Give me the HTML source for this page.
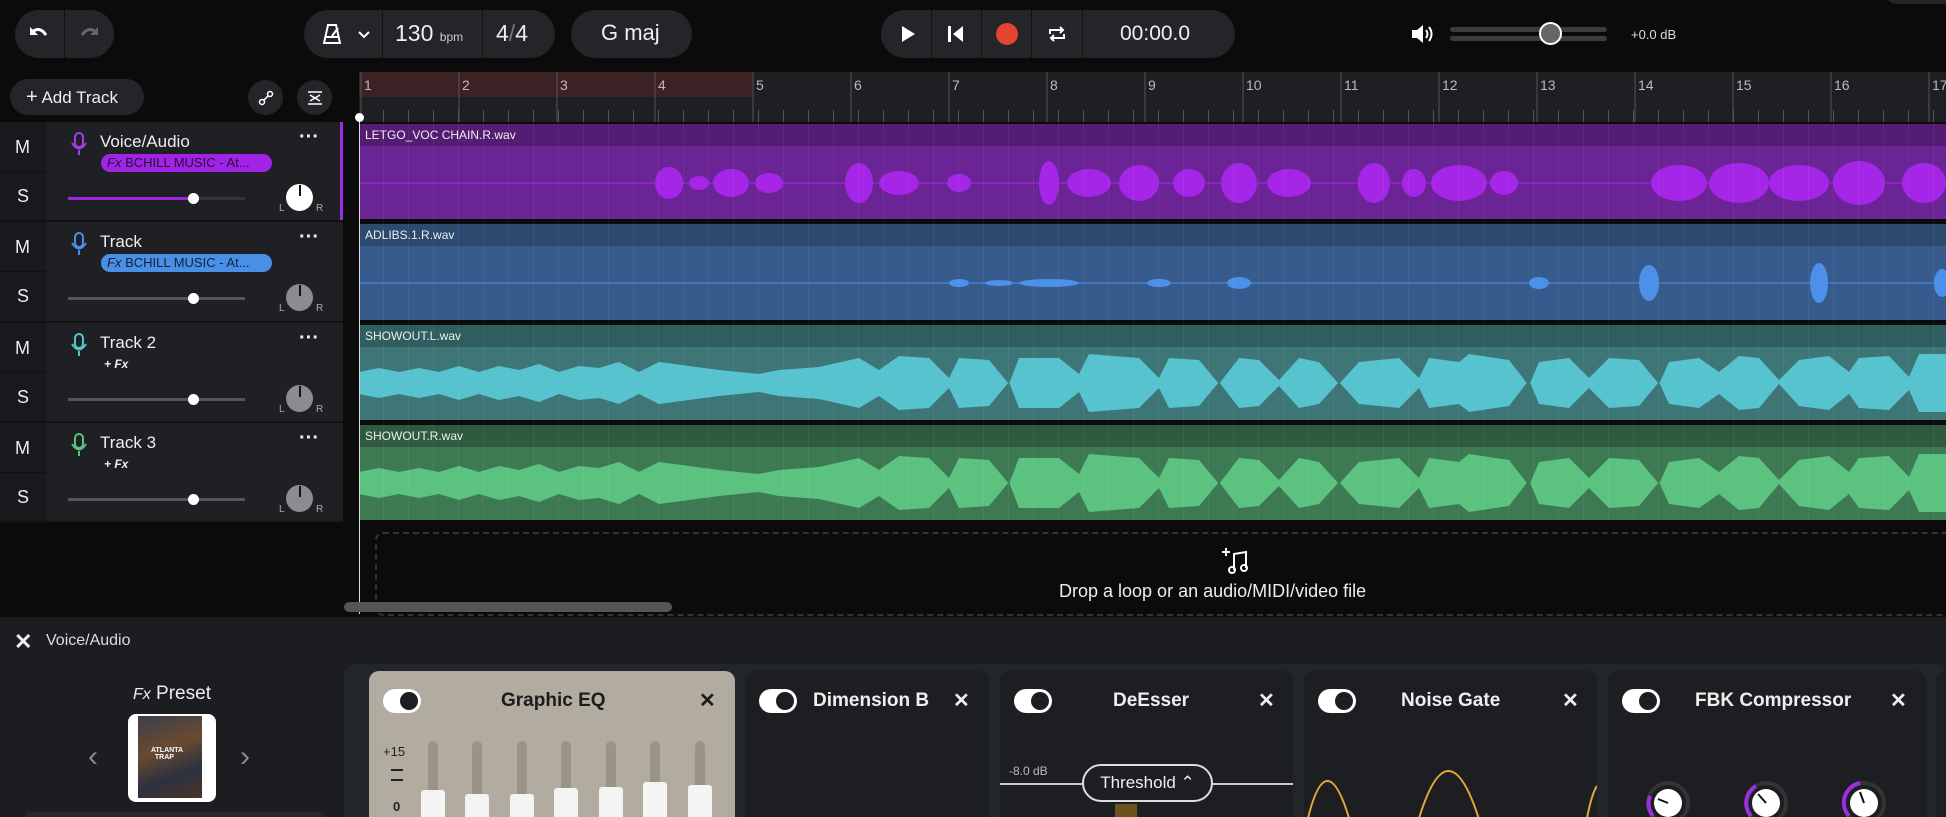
<!DOCTYPE html>
<html style="overflow:hidden;width:1946px;height:817px"><head><meta charset="utf-8"><style>
*{box-sizing:border-box;margin:0;padding:0}
body{width:1946px;height:817px;overflow:hidden;background:#0b0b0c;font-family:"Liberation Sans",sans-serif;color:#eee;position:relative}
.a{position:absolute}
.pill{position:absolute;background:#232528;border-radius:30px}
.txt{position:absolute;white-space:nowrap}
.card{position:absolute;top:671px;height:146px;background:#1c1e21;border-radius:10px 10px 0 0;overflow:hidden}
.tog{position:absolute;left:14px;top:18px;width:38px;height:24px;border-radius:12px;background:#fff}
.tog:after{content:"";position:absolute;right:3px;top:3px;width:18px;height:18px;border-radius:50%;background:#1c1e21}
.ct{position:absolute;top:19px;font-size:19px;font-weight:bold;color:#eee}
.cx{position:absolute;top:17px;font-size:20px;font-weight:bold;color:#eee}
</style></head><body>

<!-- top bar -->
<div class="pill" style="left:15px;top:10px;width:99px;height:48px"></div>
<div class="a" style="left:64px;top:10px;width:1px;height:48px;background:#111"></div>
<svg class="a" style="left:27px;top:22px" width="24" height="24" viewBox="0 0 24 24"><path d="M4 11 Q12 3 19 13" stroke="#fff" stroke-width="3" fill="none"/><path d="M3 5 L3 13 L11 13Z" fill="#fff"/></svg>
<svg class="a" style="left:77px;top:22px" width="24" height="24" viewBox="0 0 24 24"><path d="M20 11 Q12 3 5 13" stroke="#666" stroke-width="3" fill="none"/><path d="M21 5 L21 13 L13 13Z" fill="#666"/></svg>

<div class="pill" style="left:304px;top:10px;width:251px;height:48px"></div>
<div class="a" style="left:382px;top:10px;width:1px;height:48px;background:#111"></div>
<div class="a" style="left:482px;top:10px;width:1px;height:48px;background:#111"></div>
<svg class="a" style="left:320px;top:22px" width="24" height="24" viewBox="0 0 24 24"><path d="M8 3 L16 3 L20 21 L4 21Z M6 15 L18 15 M12 14 L18 6" stroke="#fff" stroke-width="2" fill="none"/></svg>
<svg class="a" style="left:358px;top:30px" width="12" height="10"><path d="M1 2 L6 7 L11 2" stroke="#fff" stroke-width="2" fill="none"/></svg>
<div class="txt" style="left:395px;top:20px;font-size:23px">130 <span style="font-size:12px;color:#ccc">bpm</span></div>
<div class="txt" style="left:496px;top:20px;font-size:23px">4<span style="color:#777">/</span>4</div>
<div class="pill" style="left:571px;top:10px;width:121px;height:48px"></div>
<div class="txt" style="left:601px;top:20px;font-size:22px">G maj</div>

<div class="pill" style="left:881px;top:10px;width:354px;height:48px"></div>
<div class="a" style="left:931px;top:10px;width:1px;height:48px;background:#111"></div>
<div class="a" style="left:981px;top:10px;width:1px;height:48px;background:#111"></div>
<div class="a" style="left:1031px;top:10px;width:1px;height:48px;background:#111"></div>
<div class="a" style="left:1082px;top:10px;width:1px;height:48px;background:#111"></div>
<svg class="a" style="left:898px;top:24px" width="20" height="20"><path d="M4 2 L17 10 L4 18Z" fill="#fff"/></svg>
<svg class="a" style="left:946px;top:24px" width="20" height="20"><rect x="2" y="2" width="3" height="16" fill="#fff"/><path d="M17 2 L7 10 L17 18Z" fill="#fff"/></svg>
<div class="a" style="left:996px;top:23px;width:22px;height:22px;border-radius:50%;background:#e3432f"></div>
<svg class="a" style="left:1045px;top:22px" width="24" height="24"><path d="M5 12 V8 H18 M15 5 L18 8 L15 11 M19 12 V16 H6 M9 13 L6 16 L9 19" stroke="#fff" stroke-width="2" fill="none"/></svg>
<div class="txt" style="left:1120px;top:22px;font-size:21px">00:00.0</div>

<svg class="a" style="left:1410px;top:22px" width="26" height="24"><path d="M2 8 H7 L13 3 V21 L7 16 H2Z" fill="#fff"/><path d="M16 8 Q19 12 16 16 M19 5 Q24 12 19 19" stroke="#fff" stroke-width="2" fill="none"/></svg>
<div class="a" style="left:1450px;top:27px;width:157px;height:5px;background:#3a3c3f;border-radius:3px"></div>
<div class="a" style="left:1450px;top:36px;width:157px;height:5px;background:#3a3c3f;border-radius:3px"></div>
<div class="a" style="left:1539px;top:22px;width:23px;height:23px;border-radius:50%;background:#666;border:2px solid #fff"></div>
<div class="txt" style="left:1631px;top:27px;font-size:13px;color:#ddd">+0.0 dB</div>
<div class="a" style="left:1885px;top:-20px;width:70px;height:24px;border-radius:12px;background:#232528"></div>

<!-- add track row -->
<div class="pill" style="left:10px;top:79px;width:134px;height:36px"></div>
<div class="txt" style="left:26px;top:86px;font-size:17px"><b style="font-size:20px;font-weight:normal">+</b> Add Track</div>
<div class="pill" style="left:248px;top:80px;width:35px;height:35px"></div>
<div class="pill" style="left:297px;top:80px;width:35px;height:35px"></div>
<svg class="a" style="left:256px;top:88px" width="20" height="20"><circle cx="6" cy="14" r="2.5" stroke="#fff" fill="none" stroke-width="1.5"/><circle cx="14" cy="6" r="2.5" stroke="#fff" fill="none" stroke-width="1.5"/><path d="M7.5 12.5 L12.5 7.5" stroke="#fff" stroke-width="1.5"/></svg>
<svg class="a" style="left:305px;top:88px" width="20" height="20"><path d="M3 4 H17 M3 16 H17 M5 7 L10 10 L15 7 M5 13 L10 10 L15 13" stroke="#fff" stroke-width="1.6" fill="none"/></svg>

<!-- ruler -->
<div class="a" style="left:359px;top:72px;width:1587px;height:50px;background:#1d1f22"></div>
<div class="a" style="left:359px;top:72px;width:393px;height:25px;background:#3c2224"></div>
<svg class="a" style="left:359px;top:72px" width="1587" height="50">
<g stroke="#555" stroke-width="1">
<line x1="2" y1="0" x2="2" y2="50"/><line x1="100" y1="0" x2="100" y2="50"/><line x1="198" y1="0" x2="198" y2="50"/><line x1="296" y1="0" x2="296" y2="50"/><line x1="394" y1="0" x2="394" y2="50"/><line x1="492" y1="0" x2="492" y2="50"/><line x1="590" y1="0" x2="590" y2="50"/><line x1="688" y1="0" x2="688" y2="50"/><line x1="786" y1="0" x2="786" y2="50"/><line x1="884" y1="0" x2="884" y2="50"/><line x1="982" y1="0" x2="982" y2="50"/><line x1="1080" y1="0" x2="1080" y2="50"/><line x1="1178" y1="0" x2="1178" y2="50"/><line x1="1276" y1="0" x2="1276" y2="50"/><line x1="1374" y1="0" x2="1374" y2="50"/><line x1="1472" y1="0" x2="1472" y2="50"/><line x1="1570" y1="0" x2="1570" y2="50"/>
</g>
<g fill="#bbb" font-size="14" font-family="Liberation Sans">
<text x="5" y="18">1</text><text x="103" y="18">2</text><text x="201" y="18">3</text><text x="299" y="18">4</text><text x="397" y="18">5</text><text x="495" y="18">6</text><text x="593" y="18">7</text><text x="691" y="18">8</text><text x="789" y="18">9</text><text x="887" y="18">10</text><text x="985" y="18">11</text><text x="1083" y="18">12</text><text x="1181" y="18">13</text><text x="1279" y="18">14</text><text x="1377" y="18">15</text><text x="1475" y="18">16</text><text x="1573" y="18">17</text>
</g>
</svg>
<div class="a" style="left:359px;top:110px;width:1587px;height:12px;background:repeating-linear-gradient(90deg,transparent 0 24px,#555 24px 25px)"></div>

<!-- left track panel -->
<div class="a" style="left:0;top:122px;width:343px;height:400px;background:#1e2023"></div>
<div class="a" style="left:0;top:122px;width:47px;height:400px;background:#18191c"></div>
<div class="a" style="left:340px;top:122px;width:3px;height:98px;background:#9b2ee0"></div>

<div class="a" style="left:0;top:122px;width:343px;height:100px;border-bottom:2px solid #111">
 <div class="a" style="left:0;top:49px;width:47px;height:1px;background:#111"></div>
 <div class="txt" style="left:15px;top:15px;font-size:18px">M</div><div class="txt" style="left:17px;top:64px;font-size:18px">S</div>
 <svg class="a" style="left:70px;top:10px" width="18" height="24"><rect x="5" y="1" width="8" height="14" rx="4" stroke="#a23ce6" stroke-width="2" fill="none"/><path d="M2 11 Q9 22 16 11 M9 18 V23" stroke="#a23ce6" stroke-width="2" fill="none"/></svg>
 <div class="txt" style="left:100px;top:10px;font-size:17px">Voice/Audio</div>
 <div class="txt" style="left:299px;top:4px;font-size:20px;font-weight:bold">···</div>
 <div class="a" style="left:101px;top:32px;width:171px;height:18px;border-radius:9px;background:#a124e6;font-size:13px;color:#231033;padding-left:6px;line-height:18px;white-space:nowrap"><i>Fx</i> BCHILL MUSIC - At...</div>
 <div class="a" style="left:68px;top:75px;width:177px;height:3px;background:#333"></div>
 <div class="a" style="left:68px;top:75px;width:125px;height:3px;background:#a124e6"></div>
 <div class="a" style="left:188px;top:71px;width:11px;height:11px;border-radius:50%;background:#fff"></div>
 <div class="a" style="left:286px;top:62px;width:27px;height:27px;border-radius:50%;background:#fff"></div><div class="a" style="left:299px;top:63px;width:2px;height:11px;background:#111"></div>
 <div class="txt" style="left:279px;top:81px;font-size:10px;color:#aaa">L</div><div class="txt" style="left:316px;top:81px;font-size:10px;color:#aaa">R</div>
</div>
<div class="a" style="left:0;top:222px;width:343px;height:101px;border-bottom:2px solid #111">
 <div class="a" style="left:0;top:49px;width:47px;height:1px;background:#111"></div>
 <div class="txt" style="left:15px;top:15px;font-size:18px">M</div><div class="txt" style="left:17px;top:64px;font-size:18px">S</div>
 <svg class="a" style="left:70px;top:10px" width="18" height="24"><rect x="5" y="1" width="8" height="14" rx="4" stroke="#4a8fe6" stroke-width="2" fill="none"/><path d="M2 11 Q9 22 16 11 M9 18 V23" stroke="#4a8fe6" stroke-width="2" fill="none"/></svg>
 <div class="txt" style="left:100px;top:10px;font-size:17px">Track</div>
 <div class="txt" style="left:299px;top:4px;font-size:20px;font-weight:bold">···</div>
 <div class="a" style="left:101px;top:32px;width:171px;height:18px;border-radius:9px;background:#4a8fe6;font-size:13px;color:#10213a;padding-left:6px;line-height:18px;white-space:nowrap"><i>Fx</i> BCHILL MUSIC - At...</div>
 <div class="a" style="left:68px;top:75px;width:177px;height:3px;background:#555"></div>
 <div class="a" style="left:188px;top:71px;width:11px;height:11px;border-radius:50%;background:#fff"></div>
 <div class="a" style="left:286px;top:62px;width:27px;height:27px;border-radius:50%;background:#8a8c90"></div><div class="a" style="left:299px;top:63px;width:2px;height:11px;background:#111"></div>
 <div class="txt" style="left:279px;top:81px;font-size:10px;color:#aaa">L</div><div class="txt" style="left:316px;top:81px;font-size:10px;color:#aaa">R</div>
</div>
<div class="a" style="left:0;top:323px;width:343px;height:100px;border-bottom:2px solid #111">
 <div class="a" style="left:0;top:49px;width:47px;height:1px;background:#111"></div>
 <div class="txt" style="left:15px;top:15px;font-size:18px">M</div><div class="txt" style="left:17px;top:64px;font-size:18px">S</div>
 <svg class="a" style="left:70px;top:10px" width="18" height="24"><rect x="5" y="1" width="8" height="14" rx="4" stroke="#56c3cf" stroke-width="2" fill="none"/><path d="M2 11 Q9 22 16 11 M9 18 V23" stroke="#56c3cf" stroke-width="2" fill="none"/></svg>
 <div class="txt" style="left:100px;top:10px;font-size:17px">Track 2</div>
 <div class="txt" style="left:299px;top:4px;font-size:20px;font-weight:bold">···</div>
 <div class="txt" style="left:104px;top:34px;font-size:12px;font-weight:bold"><i>+ Fx</i></div>
 <div class="a" style="left:68px;top:75px;width:177px;height:3px;background:#555"></div>
 <div class="a" style="left:188px;top:71px;width:11px;height:11px;border-radius:50%;background:#fff"></div>
 <div class="a" style="left:286px;top:62px;width:27px;height:27px;border-radius:50%;background:#8a8c90"></div><div class="a" style="left:299px;top:63px;width:2px;height:11px;background:#111"></div>
 <div class="txt" style="left:279px;top:81px;font-size:10px;color:#aaa">L</div><div class="txt" style="left:316px;top:81px;font-size:10px;color:#aaa">R</div>
</div>
<div class="a" style="left:0;top:423px;width:343px;height:100px;border-bottom:2px solid #111">
 <div class="a" style="left:0;top:49px;width:47px;height:1px;background:#111"></div>
 <div class="txt" style="left:15px;top:15px;font-size:18px">M</div><div class="txt" style="left:17px;top:64px;font-size:18px">S</div>
 <svg class="a" style="left:70px;top:10px" width="18" height="24"><rect x="5" y="1" width="8" height="14" rx="4" stroke="#5cc280" stroke-width="2" fill="none"/><path d="M2 11 Q9 22 16 11 M9 18 V23" stroke="#5cc280" stroke-width="2" fill="none"/></svg>
 <div class="txt" style="left:100px;top:10px;font-size:17px">Track 3</div>
 <div class="txt" style="left:299px;top:4px;font-size:20px;font-weight:bold">···</div>
 <div class="txt" style="left:104px;top:34px;font-size:12px;font-weight:bold"><i>+ Fx</i></div>
 <div class="a" style="left:68px;top:75px;width:177px;height:3px;background:#555"></div>
 <div class="a" style="left:188px;top:71px;width:11px;height:11px;border-radius:50%;background:#fff"></div>
 <div class="a" style="left:286px;top:62px;width:27px;height:27px;border-radius:50%;background:#8a8c90"></div><div class="a" style="left:299px;top:63px;width:2px;height:11px;background:#111"></div>
 <div class="txt" style="left:279px;top:81px;font-size:10px;color:#aaa">L</div><div class="txt" style="left:316px;top:81px;font-size:10px;color:#aaa">R</div>
</div>

<!-- clips -->
<svg class="a" style="left:359px;top:122px" width="1587" height="400">
<rect x="0" y="2" width="1587" height="22" fill="#541d73"/>
<rect x="0" y="24" width="1587" height="73" fill="#6a2496"/>
<line x1="0" y1="61" x2="1587" y2="61" stroke="#a526e6" stroke-width="1"/>
<g fill="#a526e6">
<ellipse cx="310" cy="61" rx="14" ry="16"/><ellipse cx="340" cy="61" rx="10" ry="7"/><ellipse cx="372" cy="61" rx="18" ry="14"/><ellipse cx="410" cy="61" rx="14" ry="10"/>
<ellipse cx="500" cy="61" rx="14" ry="20"/><ellipse cx="540" cy="61" rx="20" ry="12"/><ellipse cx="600" cy="61" rx="12" ry="9"/>
<ellipse cx="690" cy="61" rx="10" ry="22"/><ellipse cx="730" cy="61" rx="22" ry="14"/><ellipse cx="780" cy="61" rx="20" ry="18"/><ellipse cx="830" cy="61" rx="16" ry="14"/><ellipse cx="880" cy="61" rx="18" ry="20"/><ellipse cx="930" cy="61" rx="22" ry="14"/>
<ellipse cx="1015" cy="61" rx="16" ry="20"/><ellipse cx="1055" cy="61" rx="12" ry="14"/><ellipse cx="1100" cy="61" rx="28" ry="18"/><ellipse cx="1145" cy="61" rx="14" ry="12"/>
<ellipse cx="1320" cy="61" rx="28" ry="18"/><ellipse cx="1380" cy="61" rx="30" ry="20"/><ellipse cx="1440" cy="61" rx="30" ry="18"/><ellipse cx="1500" cy="61" rx="26" ry="22"/><ellipse cx="1565" cy="61" rx="22" ry="20"/>
</g>
<text x="6" y="17" fill="#eee" font-size="12" font-family="Liberation Sans">LETGO_VOC CHAIN.R.wav</text>
<rect x="0" y="102" width="1587" height="22" fill="#2b4a6e"/>
<rect x="0" y="124" width="1587" height="74" fill="#365b8c"/>
<line x1="0" y1="161" x2="1587" y2="161" stroke="#4d90ea" stroke-width="1"/>
<g fill="#4d90ea">
<ellipse cx="600" cy="161" rx="10" ry="4"/><ellipse cx="640" cy="161" rx="14" ry="3"/><ellipse cx="690" cy="161" rx="30" ry="4"/><ellipse cx="800" cy="161" rx="12" ry="4"/><ellipse cx="880" cy="161" rx="12" ry="6"/><ellipse cx="1180" cy="161" rx="10" ry="6"/><ellipse cx="1290" cy="161" rx="10" ry="18"/><ellipse cx="1460" cy="161" rx="9" ry="20"/><ellipse cx="1583" cy="161" rx="8" ry="14"/>
</g>
<text x="6" y="117" fill="#eee" font-size="12" font-family="Liberation Sans">ADLIBS.1.R.wav</text>
<rect x="0" y="203" width="1587" height="22" fill="#2f5e60"/>
<rect x="0" y="225" width="1587" height="73" fill="#56c3cf"/>
<path d="M0 225 H1587 V232 L1560 232 L1550 255 L1530 234 L1500 236 L1490 250 L1470 234 L1440 238 L1420 258 L1400 236 L1380 234 L1360 250 L1340 236 L1310 240 L1300 262 L1280 238 L1250 236 L1230 256 L1210 236 L1180 240 L1170 264 L1150 238 L1110 232 L1100 240 L1070 236 L1060 256 L1040 236 L1000 240 L980 262 L960 240 L940 236 L920 258 L900 238 L880 236 L860 262 L840 238 L810 236 L800 256 L780 236 L730 232 L720 252 L700 236 L660 236 L650 262 L630 238 L600 236 L590 256 L570 236 L540 234 L520 248 L500 236 L460 245 L420 248 L400 252 L360 248 L330 244 L300 240 L280 250 L260 240 L240 246 L220 244 L200 250 L180 242 L160 248 L140 244 L120 250 L100 244 L80 250 L60 246 L40 250 L20 246 L0 250Z" fill="#3e7577"/>
<path d="M0 298 H1587 V290 L1560 290 L1550 268 L1530 288 L1500 286 L1490 272 L1470 288 L1440 284 L1420 262 L1400 286 L1380 288 L1360 272 L1340 286 L1310 282 L1300 260 L1280 284 L1250 286 L1230 266 L1210 286 L1180 282 L1170 258 L1150 284 L1110 290 L1100 282 L1070 286 L1060 266 L1040 286 L1000 282 L980 260 L960 282 L940 286 L920 264 L900 284 L880 286 L860 260 L840 284 L810 286 L800 266 L780 286 L730 290 L720 270 L700 286 L660 286 L650 260 L630 284 L600 286 L590 266 L570 286 L540 288 L520 274 L500 286 L460 277 L420 274 L400 270 L360 274 L330 278 L300 282 L280 272 L260 282 L240 276 L220 278 L200 272 L180 280 L160 274 L140 278 L120 272 L100 278 L80 272 L60 276 L40 272 L20 276 L0 272Z" fill="#3e7577"/>
<text x="6" y="218" fill="#eee" font-size="12" font-family="Liberation Sans">SHOWOUT.L.wav</text>
<rect x="0" y="303" width="1587" height="22" fill="#2f5a3e"/>
<rect x="0" y="325" width="1587" height="73" fill="#5cc280"/>
<path d="M0 325 H1587 V332 L1560 332 L1550 355 L1530 334 L1500 336 L1490 350 L1470 334 L1440 338 L1420 358 L1400 336 L1380 334 L1360 350 L1340 336 L1310 340 L1300 362 L1280 338 L1250 336 L1230 356 L1210 336 L1180 340 L1170 364 L1150 338 L1110 332 L1100 340 L1070 336 L1060 356 L1040 336 L1000 340 L980 362 L960 340 L940 336 L920 358 L900 338 L880 336 L860 362 L840 338 L810 336 L800 356 L780 336 L730 332 L720 352 L700 336 L660 336 L650 362 L630 338 L600 336 L590 356 L570 336 L540 334 L520 348 L500 336 L460 345 L420 348 L400 352 L360 348 L330 344 L300 340 L280 350 L260 340 L240 346 L220 344 L200 350 L180 342 L160 348 L140 344 L120 350 L100 344 L80 350 L60 346 L40 350 L20 346 L0 350Z" fill="#3d7a54"/>
<path d="M0 398 H1587 V390 L1560 390 L1550 368 L1530 388 L1500 386 L1490 372 L1470 388 L1440 384 L1420 362 L1400 386 L1380 388 L1360 372 L1340 386 L1310 382 L1300 360 L1280 384 L1250 386 L1230 366 L1210 386 L1180 382 L1170 358 L1150 384 L1110 390 L1100 382 L1070 386 L1060 366 L1040 386 L1000 382 L980 360 L960 382 L940 386 L920 364 L900 384 L880 386 L860 360 L840 384 L810 386 L800 366 L780 386 L730 390 L720 370 L700 386 L660 386 L650 360 L630 384 L600 386 L590 366 L570 386 L540 388 L520 374 L500 386 L460 377 L420 374 L400 370 L360 374 L330 378 L300 382 L280 372 L260 382 L240 376 L220 378 L200 372 L180 380 L160 374 L140 378 L120 372 L100 378 L80 372 L60 376 L40 372 L20 376 L0 372Z" fill="#3d7a54"/>
<text x="6" y="318" fill="#eee" font-size="12" font-family="Liberation Sans">SHOWOUT.R.wav</text>
</svg>
<div class="a" style="left:359px;top:122px;width:1587px;height:400px;background:repeating-linear-gradient(90deg,transparent 0 24px,rgba(255,255,255,0.05) 24px 25px)"></div>

<div class="a" style="left:359px;top:114px;width:1px;height:500px;background:#ddd"></div>
<div class="a" style="left:355px;top:113px;width:9px;height:9px;border-radius:50%;background:#fff"></div>

<div class="a" style="left:375px;top:532px;width:1600px;height:84px;border:2px dashed #333;border-radius:8px"></div>
<svg class="a" style="left:1222px;top:546px" width="30" height="30"><path d="M4 2 V10 M0 6 H8" stroke="#fff" stroke-width="2"/><path d="M12 24 V8 L24 6 V22" stroke="#fff" stroke-width="2" fill="none"/><circle cx="10" cy="24" r="3" stroke="#fff" stroke-width="2" fill="none"/><circle cx="22" cy="22" r="3" stroke="#fff" stroke-width="2" fill="none"/></svg>
<div class="txt" style="left:1059px;top:581px;font-size:18px">Drop a loop or an audio/MIDI/video file</div>
<div class="a" style="left:344px;top:602px;width:328px;height:10px;border-radius:5px;background:#555"></div>

<!-- bottom panel -->
<div class="a" style="left:0;top:617px;width:1946px;height:200px;background:#1b1d20"></div>
<div class="txt" style="left:14px;top:629px;font-size:22px;font-weight:bold">✕</div>
<div class="txt" style="left:46px;top:632px;font-size:16px;color:#ddd">Voice/Audio</div>
<div class="txt" style="left:133px;top:683px;font-size:19px"><i style="font-size:16px">Fx</i> Preset</div>
<div class="a" style="left:128px;top:714px;width:88px;height:88px;border-radius:8px;background:#fff"></div>
<div class="a" style="left:138px;top:716px;width:64px;height:82px;background:linear-gradient(160deg,#3a3f4a,#6a4a30 40%,#2b3140 70%,#4a3528)"></div>
<div class="txt" style="left:151px;top:747px;font-size:7px;font-weight:bold;color:#fff">ATLANTA<br>&nbsp;&nbsp;TRAP</div>
<div class="txt" style="left:88px;top:740px;font-size:30px;color:#888">‹</div>
<div class="txt" style="left:240px;top:740px;font-size:30px;color:#888">›</div>
<div class="a" style="left:25px;top:812px;width:300px;height:10px;border-radius:5px;background:#26282c"></div>

<div class="a" style="left:344px;top:664px;width:1602px;height:153px;background:#22252a;border-radius:12px 12px 0 0"></div>
<div class="card" style="left:369px;width:366px;background:#b2aba0">
 <div class="tog" style="background:#fff"></div>
 <div class="ct" style="left:132px;color:#1b1b1b">Graphic EQ</div>
 <div class="cx" style="left:330px;color:#1b1b1b">✕</div>
 <div class="txt" style="left:14px;top:73px;font-size:13px;color:#222">+15</div>
 <div class="a" style="left:22px;top:98px;width:12px;height:2px;background:#222"></div>
 <div class="a" style="left:22px;top:108px;width:12px;height:2px;background:#222"></div>
 <div class="txt" style="left:24px;top:128px;font-size:13px;color:#222;font-weight:bold">0</div>
 <div class="a" style="left:59px;top:70px;width:10px;height:90px;border-radius:5px;background:#9a9388"></div>
 <div class="a" style="left:103px;top:70px;width:10px;height:90px;border-radius:5px;background:#9a9388"></div>
 <div class="a" style="left:148px;top:70px;width:10px;height:90px;border-radius:5px;background:#9a9388"></div>
 <div class="a" style="left:192px;top:70px;width:10px;height:90px;border-radius:5px;background:#9a9388"></div>
 <div class="a" style="left:237px;top:70px;width:10px;height:90px;border-radius:5px;background:#9a9388"></div>
 <div class="a" style="left:281px;top:70px;width:10px;height:90px;border-radius:5px;background:#9a9388"></div>
 <div class="a" style="left:326px;top:70px;width:10px;height:90px;border-radius:5px;background:#9a9388"></div>
 <div class="a" style="left:52px;top:119px;width:24px;height:40px;border-radius:3px;background:#f4f4f4"></div>
 <div class="a" style="left:96px;top:123px;width:24px;height:40px;border-radius:3px;background:#f4f4f4"></div>
 <div class="a" style="left:141px;top:123px;width:24px;height:40px;border-radius:3px;background:#f4f4f4"></div>
 <div class="a" style="left:185px;top:117px;width:24px;height:40px;border-radius:3px;background:#f4f4f4"></div>
 <div class="a" style="left:230px;top:116px;width:24px;height:40px;border-radius:3px;background:#f4f4f4"></div>
 <div class="a" style="left:274px;top:111px;width:24px;height:40px;border-radius:3px;background:#f4f4f4"></div>
 <div class="a" style="left:319px;top:114px;width:24px;height:40px;border-radius:3px;background:#f4f4f4"></div>
</div>
<div class="card" style="left:745px;width:244px">
 <div class="tog"></div><div class="ct" style="left:68px">Dimension B</div><div class="cx" style="left:208px">✕</div>
</div>
<div class="card" style="left:1000px;width:293px">
 <div class="tog"></div><div class="ct" style="left:113px">DeEsser</div><div class="cx" style="left:258px">✕</div>
 <div class="txt" style="left:9px;top:93px;font-size:12px;color:#bbb">-8.0 dB</div>
 <div class="a" style="left:0;top:112px;width:293px;height:2px;background:#ccc"></div>
 <div class="a" style="left:82px;top:93px;width:131px;height:38px;border-radius:19px;background:#1c1e21;border:2px solid #ddd;font-size:17px;color:#eee;text-align:center;line-height:34px">Threshold ⌃</div>
 <div class="a" style="left:115px;top:133px;width:22px;height:30px;background:#6b5220"></div>
</div>
<div class="card" style="left:1304px;width:293px">
 <div class="tog"></div><div class="ct" style="left:97px">Noise Gate</div><div class="cx" style="left:258px">✕</div>
 <svg class="a" style="left:0;top:85px" width="293" height="80"><path d="M0 80 Q22 -30 50 80 M110 80 Q144 -50 180 80 M280 80 Q286 40 293 30" stroke="#e2a93a" stroke-width="2" fill="none"/></svg>
</div>
<div class="card" style="left:1608px;width:318px">
 <div class="tog"></div><div class="ct" style="left:87px">FBK Compressor</div><div class="cx" style="left:282px">✕</div>
 <svg class="a" style="left:0;top:110px" width="318" height="55">
  <circle cx="60" cy="22" r="20" stroke="#333" stroke-width="4" fill="none"/><path d="M45 35 A20 20 0 0 1 42 15" stroke="#9a2ee0" stroke-width="4" fill="none"/><circle cx="60" cy="22" r="14" fill="#fff"/><path d="M60 22 L50 18" stroke="#111" stroke-width="2"/>
  <circle cx="158" cy="22" r="20" stroke="#333" stroke-width="4" fill="none"/><path d="M143 35 A20 20 0 0 1 148 5" stroke="#9a2ee0" stroke-width="4" fill="none"/><circle cx="158" cy="22" r="14" fill="#fff"/><path d="M158 22 L150 13" stroke="#111" stroke-width="2"/>
  <circle cx="256" cy="22" r="20" stroke="#333" stroke-width="4" fill="none"/><path d="M241 35 A20 20 0 0 1 252 2" stroke="#9a2ee0" stroke-width="4" fill="none"/><circle cx="256" cy="22" r="14" fill="#fff"/><path d="M256 22 L252 11" stroke="#111" stroke-width="2"/>
 </svg>
</div>
<div class="card" style="left:1936px;width:20px"></div>
</body></html>
